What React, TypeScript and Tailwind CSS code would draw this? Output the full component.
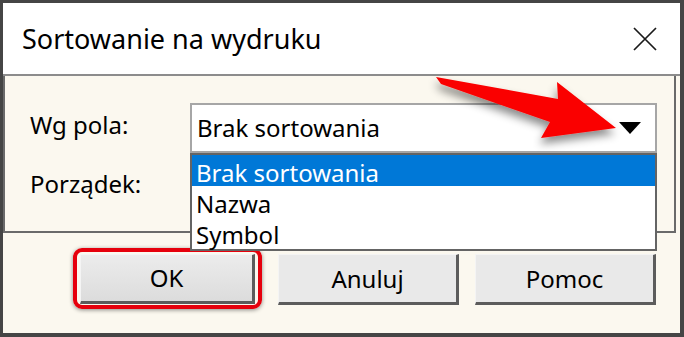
export default function App() {
  return (
    <div className="relative flex h-[337px] w-[684px] flex-col overflow-hidden border-b-[4px] border-l-[3px] border-r-[4px] border-t-[3px] border-[#454545] bg-[#fbf8ef] font-['Noto_Sans',sans-serif] text-black">
      {/* title bar */}
      <div className="flex h-[73px] shrink-0 items-center justify-between border-b-2 border-[#8c8c8c] bg-white pl-[19px] pr-[23px]">
        <span className="text-[27px] leading-[36px]">Sortowanie na wydruku</span>
        <svg width="24" height="24" viewBox="0 0 24 24">
          <path d="M1 1 L23 23 M23 1 L1 23" stroke="#1a1a1a" strokeWidth="1.7" />
        </svg>
      </div>

      {/* group */}
      <div className="mr-[4px] h-[157px] shrink-0 border-b-2 border-l-2 border-r-2 border-[#6a6a6a] pt-[27px]">
        <div className="flex h-[50px]">
          <div className="w-[185px] pl-[25px] pt-[6px] text-[24px] leading-[32px]">Wg pola:</div>
          <div className="relative flex h-[50px] w-[467px] items-center justify-between border-2 border-[#a6a6a6] bg-white pl-[5px] pr-[14px]">
            <span className="text-[24px] leading-[32px]">Brak sortowania</span>
            <svg width="22" height="12" viewBox="0 0 22 12">
              <polygon points="0,0 22,0 11,12" fill="#000" />
            </svg>
            {/* open list */}
            <div className="absolute left-[-2px] top-[48px] z-10 h-[98px] w-[467px] border-2 border-[#646464] bg-white text-[24px]">
              <div className="h-[31px] bg-[#0078d7] pl-[4px] leading-[35px] text-white">Brak sortowania</div>
              <div className="h-[31px] pl-[4px] leading-[35px]">Nazwa</div>
              <div className="h-[31px] pl-[4px] leading-[35px]">Symbol</div>
            </div>
          </div>
        </div>
        <div className="mt-[15px] pl-[25px] text-[24px] leading-[32px]">Porządek:</div>
      </div>

      {/* buttons */}
      <div className="flex pl-[77px] pt-[21px] text-[24px]">
        <div className="relative">
          <div className="absolute -bottom-[4px] -left-[7px] -right-[7px] -top-[6px] rounded-[9px] border-[4px] border-[#e6000c] shadow-[0_1px_4px_rgba(0,0,0,0.45)]" />
          <button className="flex h-[50px] w-[175px] items-center justify-center border-b-[3px] border-l border-r-[3px] border-t border-b-[#5c5c5c] border-l-[#f4f4f4] border-r-[#5c5c5c] border-t-[#f4f4f4] bg-gradient-to-b from-[#ececec] to-[#dcdcdc] leading-[32px]">
            OK
          </button>
        </div>
        <button className="ml-[23px] flex h-[51px] w-[181px] items-center justify-center border-b-[3px] border-l border-r-[3px] border-t border-b-[#5c5c5c] border-l-[#f4f4f4] border-r-[#5c5c5c] border-t-[#f4f4f4] bg-[#e9e9e9] leading-[32px]">
          Anuluj
        </button>
        <button className="ml-[16px] flex h-[51px] w-[181px] items-center justify-center border-b-[3px] border-l border-r-[3px] border-t border-b-[#5c5c5c] border-l-[#f4f4f4] border-r-[#5c5c5c] border-t-[#f4f4f4] bg-[#e9e9e9] leading-[32px]">
          Pomoc
        </button>
      </div>

      {/* annotation arrow */}
      <svg className="pointer-events-none absolute left-[-3px] top-[-3px] z-20 h-[337px] w-[684px]" viewBox="0 0 684 337">
        <defs>
          <filter id="sh" x="-20%" y="-40%" width="140%" height="180%">
            <feDropShadow dx="-1" dy="6" stdDeviation="4" floodColor="#000" floodOpacity="0.45" />
          </filter>
        </defs>
        <polygon
          points="436,77 558,99 557,82 616,128 541,138 550,122 441,84"
          fill="#fa0000"
          filter="url(#sh)"
        />
      </svg>
    </div>
  )
}
